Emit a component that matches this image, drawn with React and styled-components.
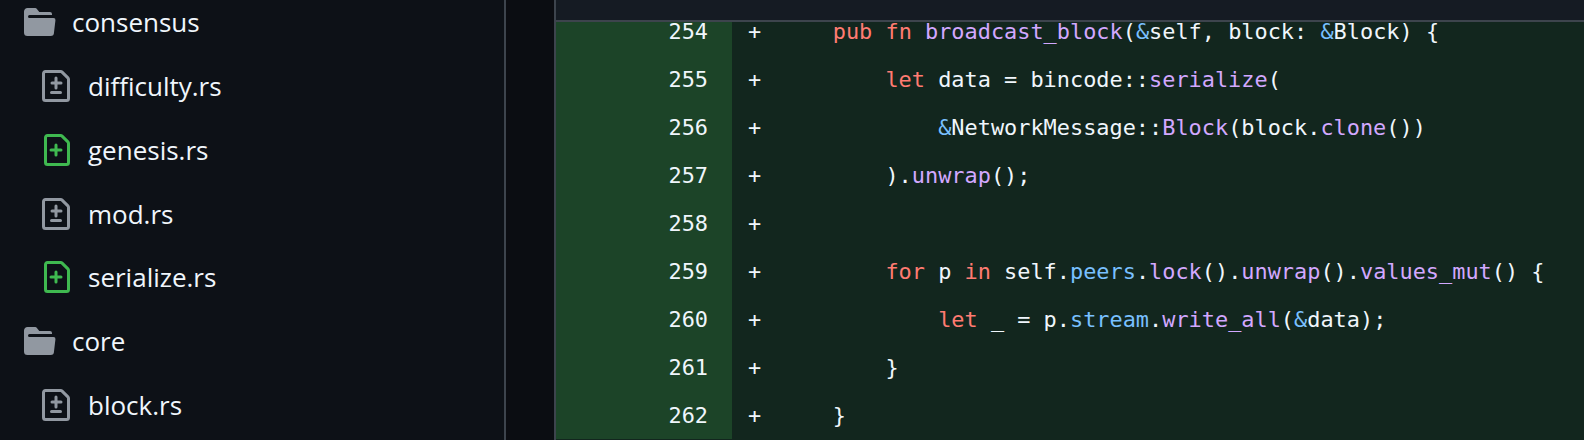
import React from "react";
import styled, { createGlobalStyle } from "styled-components";

const Global = createGlobalStyle`
  html, body { margin: 0; padding: 0; background: #0d1117; }
  #root { width: 1584px; height: 440px; overflow: hidden; }
`;

const Page = styled.div`
  display: flex;
  width: 1584px;
  height: 440px;
  overflow: hidden;
  background: #0d1117;
`;

const Sidebar = styled.aside`
  width: 504px;
  flex: none;
  overflow: hidden;
  background: #0d1117;
  border-right: 2px solid #3d444d;
`;

const Tree = styled.ul`
  list-style: none;
  margin: -9.6px 0 0;
  padding: 0;
`;

const TreeRow = styled.li`
  display: flex;
  align-items: center;
  height: 63.8px;
  padding-left: ${(p) => (p.$file ? 40 : 24)}px;
  gap: 16px;
  font-family: "Open Sans", "Noto Sans", sans-serif;
  font-size: 26px;
  color: #f0f6fc;
`;

const Icon = styled.svg`
  width: 32px;
  height: 32px;
  flex: none;
  fill: ${(p) => p.$color};
`;

const Gutter = styled.div`
  width: 48px;
  flex: none;
  background: #0b0d12;
`;

const Main = styled.main`
  flex: 1;
  min-width: 0;
  display: flex;
  flex-direction: column;
  background: #12261e;
  border-left: 2px solid #3d444d;
`;

const FileHeader = styled.header`
  height: 20px;
  flex: none;
  background: #151b23;
  border-bottom: 2px solid #3d444d;
`;

const Viewport = styled.div`
  flex: 1;
  min-height: 0;
  overflow: hidden;
`;

const Lines = styled.div`
  margin-top: -15px;
`;

const Line = styled.div`
  display: flex;
  align-items: center;
  height: 48px;
  font-family: "DejaVu Sans Mono", "Liberation Mono", monospace;
  font-size: 21.9px;
  color: #f0f6fc;
  white-space: pre;
`;

const Num = styled.span`
  width: 176px;
  height: 100%;
  flex: none;
  box-sizing: border-box;
  padding-right: 24px;
  display: flex;
  align-items: center;
  justify-content: flex-end;
  background: #1c4428;
`;

const Sign = styled.span`
  width: 16px;
  margin-left: 16px;
  margin-right: 16px;
  flex: none;
`;

const Kw = styled.span`color: #ff7b72;`;
const Fn = styled.span`color: #d2a8ff;`;
const Pr = styled.span`color: #79c0ff;`;

const DIFF = "M1 1.75C1 .784 1.784 0 2.75 0h7.586c.464 0 .909.184 1.237.513l2.914 2.914c.329.328.513.773.513 1.237v9.586A1.75 1.75 0 0 1 13.25 16H2.75A1.75 1.75 0 0 1 1 14.25Zm1.75-.25a.25.25 0 0 0-.25.25v12.5c0 .138.112.25.25.25h10.5a.25.25 0 0 0 .25-.25V4.664a.25.25 0 0 0-.073-.177l-2.914-2.914a.25.25 0 0 0-.177-.073ZM8 3.25a.75.75 0 0 1 .75.75v1.75h1.75a.75.75 0 0 1 0 1.5H8.75v1.75a.75.75 0 0 1-1.5 0V7.25H6a.75.75 0 0 1 0-1.5h1.25V4A.75.75 0 0 1 8 3.25ZM5 11.25a.75.75 0 0 1 .75-.75h4.5a.75.75 0 0 1 0 1.5h-4.5a.75.75 0 0 1-.75-.75Z";
const ADDED = "M2 1.75C2 .784 2.784 0 3.75 0h6.586c.464 0 .909.184 1.237.513l2.914 2.914c.329.328.513.773.513 1.237v9.586A1.75 1.75 0 0 1 13.25 16h-9.5A1.75 1.75 0 0 1 2 14.25Zm1.75-.25a.25.25 0 0 0-.25.25v12.5c0 .138.112.25.25.25h9.5a.25.25 0 0 0 .25-.25V4.664a.25.25 0 0 0-.073-.177l-2.914-2.914a.25.25 0 0 0-.177-.073ZM8 4.75a.75.75 0 0 1 .75.75v1.75h1.75a.75.75 0 0 1 0 1.5H8.75v1.75a.75.75 0 0 1-1.5 0V8.75H5.5a.75.75 0 0 1 0-1.5h1.75V5.5A.75.75 0 0 1 8 4.75Z";
const FOLDER = "M.513 1.513A1.75 1.75 0 0 1 1.75 1h3.5c.55 0 1.07.26 1.4.7l.9 1.2a.25.25 0 0 0 .2.1H13a1 1 0 0 1 1 1v.5H2.75a.75.75 0 0 0 0 1.5h11.978a1 1 0 0 1 .994 1.117L15 13.25A1.75 1.75 0 0 1 13.25 15H1.75A1.75 1.75 0 0 1 0 13.25V2.75c0-.464.184-.91.513-1.237Z";

const tree = [
  { kind: "folder", name: "consensus" },
  { kind: "diff", name: "difficulty.rs" },
  { kind: "added", name: "genesis.rs" },
  { kind: "diff", name: "mod.rs" },
  { kind: "added", name: "serialize.rs" },
  { kind: "folder", name: "core" },
  { kind: "diff", name: "block.rs" },
];

const icons = {
  folder: { d: FOLDER, color: "#9198a1" },
  diff: { d: DIFF, color: "#9198a1" },
  added: { d: ADDED, color: "#3fb950" },
};

const code = [
  [254, <>    <Kw>pub</Kw> <Kw>fn</Kw> <Fn>broadcast_block</Fn>(<Pr>&amp;</Pr>self, block: <Pr>&amp;</Pr>Block) {"{"}</>],
  [255, <>        <Kw>let</Kw> data = bincode::<Fn>serialize</Fn>(</>],
  [256, <>            <Pr>&amp;</Pr>NetworkMessage::<Fn>Block</Fn>(block.<Fn>clone</Fn>())</>],
  [257, <>        ).<Fn>unwrap</Fn>();</>],
  [258, <></>],
  [259, <>        <Kw>for</Kw> p <Kw>in</Kw> self.<Pr>peers</Pr>.<Fn>lock</Fn>().<Fn>unwrap</Fn>().<Fn>values_mut</Fn>() {"{"}</>],
  [260, <>            <Kw>let</Kw> _ = p.<Pr>stream</Pr>.<Fn>write_all</Fn>(<Pr>&amp;</Pr>data);</>],
  [261, <>        {"}"}</>],
  [262, <>    {"}"}</>],
];

export default function App() {
  return (
    <Page>
      <Global />
      <Sidebar>
        <Tree>
          {tree.map((t) => (
            <TreeRow key={t.name} $file={t.kind !== "folder"}>
              <Icon viewBox="0 0 16 16" $color={icons[t.kind].color}>
                <path d={icons[t.kind].d} />
              </Icon>
              {t.name}
            </TreeRow>
          ))}
        </Tree>
      </Sidebar>
      <Gutter />
      <Main>
        <FileHeader />
        <Viewport>
          <Lines>
            {code.map(([n, c]) => (
              <Line key={n}>
                <Num>{n}</Num>
                <Sign>+</Sign>
                <span>{c}</span>
              </Line>
            ))}
          </Lines>
        </Viewport>
      </Main>
    </Page>
  );
}
